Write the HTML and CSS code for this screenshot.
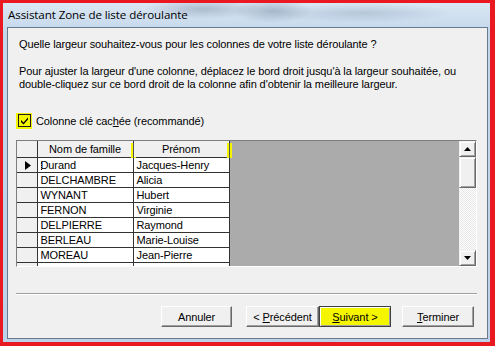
FILE: index.html
```html
<!DOCTYPE html>
<html lang="fr">
<head>
  <meta charset="UTF-8" />
  <title>Assistant Zone de liste déroulante</title>
  <link rel="stylesheet" href="styles.css">
</head>
<body>
  <div class="window">
    <div class="titlebar">Assistant Zone de liste déroulante</div>
    <div class="client">
      <p class="question">Quelle largeur souhaitez-vous pour les colonnes de votre liste déroulante ?</p>
      <p class="hint">
        Pour ajuster la largeur d'une colonne, déplacez le bord droit jusqu'à la largeur souhaitée, ou<br>
        double-cliquez sur ce bord droit de la colonne afin d'obtenir la meilleure largeur.
      </p>
      <label class="check">
        <span class="check-hl">
          <span class="check-box">
            <svg width="11" height="11" viewBox="0 0 11 11"><path d="M2 5 L4.5 7.5 L9 2.5 L9 4.5 L4.5 9.5 L2 7 Z" fill="#000"/></svg>
          </span>
        </span>
        <span>Colonne clé cac<u>h</u>ée (recommandé)</span>
      </label>

      <div class="grid">
        <div class="sheet">
          <table>
            <colgroup><col class="c-sel"><col class="c-name"><col class="c-first"></colgroup>
            <thead>
              <tr><th class="sel"></th><th class="mark">Nom de famille</th><th class="mark">Prénom</th></tr>
            </thead>
            <tbody>
              <tr>
                <td class="sel"><svg width="6" height="9" viewBox="0 0 6 9"><path d="M0 0 L6 4.5 L0 9 Z" fill="#000"/></svg></td>
                <td><span class="caret"></span>Durand</td><td>Jacques-Henry</td>
              </tr>
              <tr><td class="sel"></td><td>DELCHAMBRE</td><td>Alicia</td></tr>
              <tr><td class="sel"></td><td>WYNANT</td><td>Hubert</td></tr>
              <tr><td class="sel"></td><td>FERNON</td><td>Virginie</td></tr>
              <tr><td class="sel"></td><td>DELPIERRE</td><td>Raymond</td></tr>
              <tr><td class="sel"></td><td>BERLEAU</td><td>Marie-Louise</td></tr>
              <tr><td class="sel"></td><td>MOREAU</td><td>Jean-Pierre</td></tr>
              <tr><td class="sel"></td><td></td><td></td></tr>
            </tbody>
          </table>
        </div>
        <div class="vscroll">
          <div class="sb-btn"><svg width="7" height="4" viewBox="0 0 7 4"><path d="M3.5 0 L7 4 L0 4 Z" fill="#000"/></svg></div>
          <div class="sb-thumb"></div>
          <div class="sb-track"></div>
          <div class="sb-btn"><svg width="7" height="4" viewBox="0 0 7 4"><path d="M0 0 L7 0 L3.5 4 Z" fill="#000"/></svg></div>
        </div>
      </div>

      <div class="separator"></div>

      <div class="actions">
        <button class="btn btn-cancel">Annuler</button>
        <div class="btn-pair">
          <button class="btn btn-prev">&lt; <u>P</u>récédent</button>
          <button class="btn btn-next"><u>S</u>uivant &gt;</button>
        </div>
        <button class="btn btn-finish"><u>T</u>erminer</button>
      </div>
    </div>
  </div>
</body>
</html>
```

FILE: styles.css
```css
:root {
  --face: #f0f0f0;
  --frame-red: #ea1820;
  --line: #333333;
  --shadow: #a0a0a0;
  --dark: #696969;
  --hl: #f5f500;
}
* { box-sizing: border-box; margin: 0; padding: 0; }
body {
  font-family: "Liberation Sans", Tahoma, sans-serif;
  font-size: 11px;
  letter-spacing: -0.1px;
  color: #000;
  background: #fff;
}
.window {
  width: 495px; height: 346px;
  border: solid var(--frame-red);
  border-width: 3px 5px 4px 3px;
  display: flex; flex-direction: column;
  background:
    radial-gradient(ellipse 60px 10px at 200px 6px, rgba(120,140,165,0.45), transparent),
    radial-gradient(ellipse 40px 12px at 270px 8px, rgba(110,130,155,0.45), transparent),
    radial-gradient(ellipse 90px 10px at 360px 10px, rgba(140,160,185,0.4), transparent),
    radial-gradient(ellipse 80px 4px at 300px 342px, rgba(110,130,155,0.5), transparent),
    linear-gradient(#dbe7f3, #c3d7ec 30px, #bcd2ea);
}
.titlebar {
  height: 24px;
  padding: 3px 0 0 5px;
  font-family: "Open Sans", "Noto Sans", sans-serif;
  font-size: 11.6px; line-height: 18px;
  letter-spacing: -0.1px;
  color: #000;
}
.client {
  flex: 1;
  margin: 0 2px 3px 4px;
  border: 1px solid #6b7a8b;
  background: var(--face);
  padding: 10px 10px 0 8px;
}
.question, .hint { margin-left: 3px; line-height: 13px; }
.hint { margin-top: 14px; }

.check {
  display: flex; align-items: center; gap: 4px;
  margin-top: 22px; height: 15px;
}
.check-hl {
  width: 16px; height: 16px; background: var(--hl);
  display: flex; align-items: center; justify-content: center;
}
.check-box {
  width: 13px; height: 13px;
  border: 1px solid #1d1d1d;
  background: var(--hl);
  display: flex; align-items: center; justify-content: center;
}

.grid {
  margin-top: 12px;
  height: 127px;
  display: flex;
  border: 1px solid;
  border-color: #7d7d7d #ffffff #ffffff #7d7d7d;
}
.sheet {
  flex: 1;
  background: #ababab;
  overflow: hidden;
}
table {
  border-collapse: collapse;
  table-layout: fixed;
}
.c-sel { width: 20px; }
.c-name, .c-first { width: 96px; }
th, td {
  height: 15px;
  border-right: 1px solid var(--line);
  border-bottom: 1px solid var(--line);
  white-space: nowrap; overflow: hidden;
  font-weight: normal;
  padding: 0 3px;
  line-height: 14px;
  text-align: left;
  background: #fff;
}
th {
  height: 16px;
  background: var(--face);
  text-align: center;
  position: relative;
  overflow: visible;
}
th.sel, td.sel { background: var(--face); padding: 0; text-align: center; }
td.sel svg { display: inline-block; vertical-align: middle; margin-left: 2px; }
th.mark::after {
  content: "";
  position: absolute;
  right: -3px; top: 2px; bottom: -1px;
  width: 5px;
  background: linear-gradient(90deg, var(--hl) 0 2px, #555 2px 3px, var(--hl) 3px);
}
.caret {
  display: inline-block;
  width: 1px; height: 8px;
  border-left: 1px dotted #000;
  vertical-align: -1px;
  margin-right: -1px;
}

.vscroll {
  width: 17px;
  display: flex; flex-direction: column;
  background: repeating-conic-gradient(#ffffff 0 25%, #e6e6e6 0 50%) 0 0 / 2px 2px;
}
.sb-btn, .sb-thumb {
  background: var(--face);
  border: 1px solid;
  border-color: var(--face) var(--dark) var(--dark) var(--face);
  box-shadow: inset 1px 1px #fff, inset -1px -1px var(--shadow);
}
.sb-btn {
  height: 16px;
  display: flex; align-items: center; justify-content: center;
}
.sb-thumb { height: 31px; }
.sb-track { flex: 1; }

.separator {
  margin-top: 26px;
  height: 2px;
  border-top: 1px solid var(--shadow);
  border-bottom: 1px solid #fff;
}

.actions {
  display: flex; justify-content: flex-end;
  margin-top: 11px;
  padding-right: 3px;
}
.btn {
  height: 21px; width: 72px;
  font-family: inherit; font-size: 11px;
  letter-spacing: -0.1px;
  background: var(--face);
  border: 1px solid;
  border-color: #fff var(--dark) var(--dark) #fff;
  box-shadow: inset -1px -1px var(--shadow);
  color: #000;
}
.btn-cancel { width: 71px; margin-right: 14px; }
.btn-pair { display: flex; margin-right: 11px; }
.btn-prev { width: 73px; }
.btn-next {
  background: var(--hl);
  border-color: #404040;
  box-shadow: inset 1px 1px #fff, inset -1px -1px var(--shadow);
}
```
